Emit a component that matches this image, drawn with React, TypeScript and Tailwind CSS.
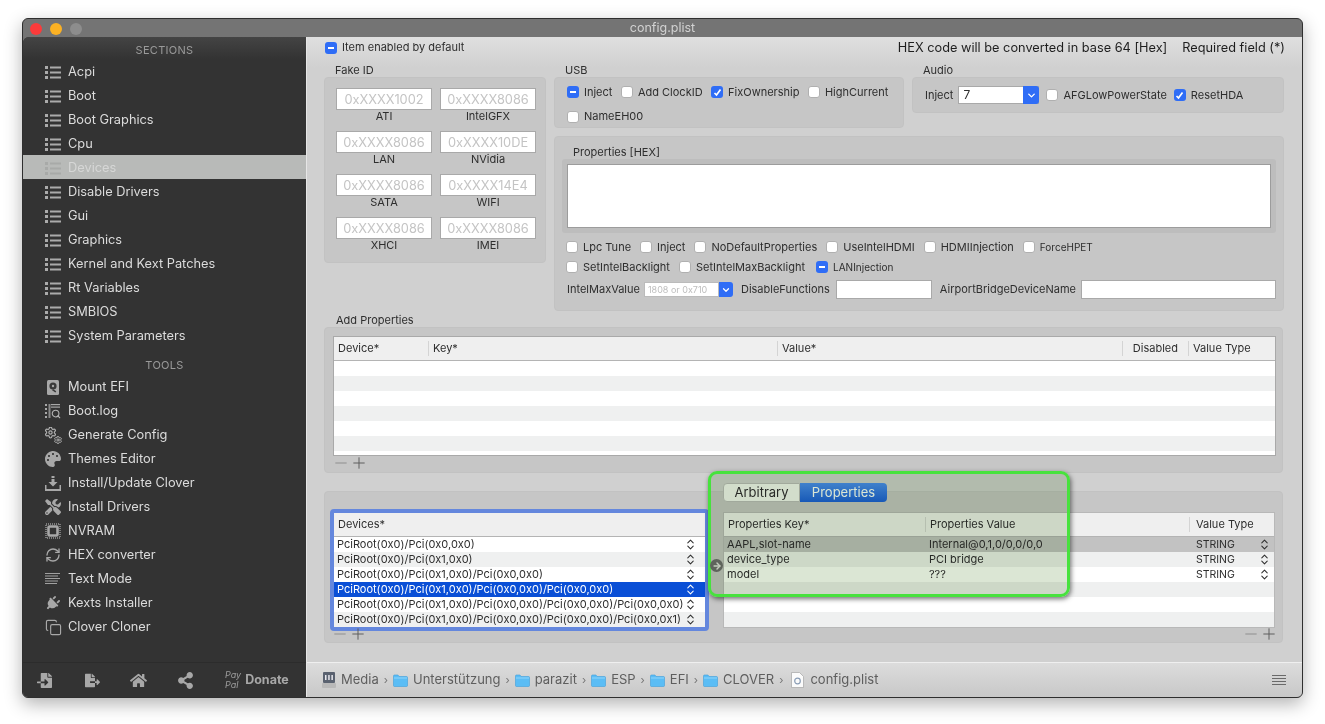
import { ArrowRight, Copy, ChevronDown, ChevronsUpDown, Minus, Plus, RefreshCw, Search, Settings } from "lucide-react"
import { FaFileExport, FaFileImport, FaHome, FaPalette, FaPlug, FaShareAlt, FaTools } from "react-icons/fa"
import type { ReactNode } from "react"

const sections = ["Acpi", "Boot", "Boot Graphics", "Cpu", "Devices", "Disable Drivers", "Gui", "Graphics", "Kernel and Kext Patches", "Rt Variables", "SMBIOS", "System Parameters"]

const fakeIds = [
  ["0xXXXX1002", "ATI"],
  ["0xXXXX8086", "IntelGFX"],
  ["0xXXXX8086", "LAN"],
  ["0xXXXX10DE", "NVidia"],
  ["0xXXXX8086", "SATA"],
  ["0xXXXX14E4", "WIFI"],
  ["0xXXXX8086", "XHCI"],
  ["0xXXXX8086", "IMEI"],
]

const devices = [
  "PciRoot(0x0)/Pci(0x0,0x0)",
  "PciRoot(0x0)/Pci(0x1,0x0)",
  "PciRoot(0x0)/Pci(0x1,0x0)/Pci(0x0,0x0)",
  "PciRoot(0x0)/Pci(0x1,0x0)/Pci(0x0,0x0)/Pci(0x0,0x0)",
  "PciRoot(0x0)/Pci(0x1,0x0)/Pci(0x0,0x0)/Pci(0x0,0x0)/Pci(0x0,0x0)",
  "PciRoot(0x0)/Pci(0x1,0x0)/Pci(0x0,0x0)/Pci(0x0,0x0)/Pci(0x0,0x1)",
]

const properties = [
  ["AAPL,slot-name", "Internal@0,1,0/0,0/0,0"],
  ["device_type", "PCI bridge"],
  ["model", "???"],
]

function ListIcon({ color = "#ababab" }: { color?: string }) {
  return (
    <svg width="16" height="13" viewBox="0 0 16 13" fill={color}>
      <rect x="0" y="0" width="3" height="3" />
      <rect x="0" y="5" width="3" height="3" />
      <rect x="0" y="10" width="3" height="3" />
      <rect x="5" y="0.5" width="11" height="2" />
      <rect x="5" y="5.5" width="11" height="2" />
      <rect x="5" y="10.5" width="11" height="2" />
    </svg>
  )
}

function DiskIcon() {
  return (
    <svg width="16" height="16" viewBox="0 0 16 16">
      <rect x="2" y="1" width="12" height="15" rx="1.5" fill="#a8a8a8" />
      <circle cx="8" cy="7" r="3.6" fill="#3a3a3a" />
      <circle cx="8" cy="7" r="1.2" fill="#a8a8a8" />
      <rect x="8" y="10" width="4" height="1.6" fill="#3a3a3a" transform="rotate(35 8 10)" />
    </svg>
  )
}

function LogIcon() {
  return (
    <svg width="16" height="16" viewBox="0 0 16 16" fill="#a8a8a8">
      <rect x="0" y="1" width="2" height="2" />
      <rect x="0" y="5" width="2" height="2" />
      <rect x="0" y="9" width="2" height="2" />
      <rect x="0" y="13" width="2" height="2" />
      <rect x="3.5" y="1" width="2" height="14" fill="#8a8a8a" />
      <rect x="6" y="1" width="9" height="1.2" />
      <rect x="6" y="3.5" width="9" height="1.2" />
      <Search x={6} y={6} width={10} height={10} color="#b5b5b5" strokeWidth={2.6} />
    </svg>
  )
}

function GearsIcon() {
  return (
    <svg width="17" height="17" viewBox="0 0 17 17">
      <Settings x={-1} y={-1} width={13} height={13} color="#b0b0b0" strokeWidth={2.2} />
      <Settings x={8.5} y={8.5} width={9} height={9} color="#b0b0b0" strokeWidth={2.6} />
    </svg>
  )
}

function InstallIcon() {
  return (
    <svg width="16" height="15" viewBox="0 0 16 15" fill="#a8a8a8">
      <rect x="6.5" y="0" width="3" height="2" />
      <path d="M6.5 3h3v3h3L8 10.5 3.500 6h3z" />
      <path d="M0 9h1.500v4h13V9H16v6H0z" />
    </svg>
  )
}

function ChipIcon() {
  return (
    <svg width="16" height="16" viewBox="0 0 16 16" fill="none">
      <rect x="1" y="1" width="14" height="14" stroke="#7d7d7d" strokeWidth="2" strokeDasharray="1 1" />
      <rect x="3.500" y="3.500" width="9" height="9" rx="1" stroke="#a8a8a8" strokeWidth="2.600" />
    </svg>
  )
}

function TextIcon() {
  return (
    <svg width="15" height="12" viewBox="0 0 15 12" fill="#a0a0a0">
      <rect x="0" y="0" width="15" height="1" />
      <rect x="0" y="2.500" width="13" height="1" />
      <rect x="0" y="5" width="15" height="1" />
      <rect x="0" y="7.500" width="13" height="1" />
      <rect x="0" y="10" width="12" height="1" />
    </svg>
  )
}

const tools: [string, ReactNode][] = [
  ["Mount EFI", <DiskIcon />],
  ["Boot.log", <LogIcon />],
  ["Generate Config", <GearsIcon />],
  ["Themes Editor", <FaPalette size={16} color="#a8a8a8" />],
  ["Install/Update Clover", <InstallIcon />],
  ["Install Drivers", <FaTools size={16} color="#a8a8a8" />],
  ["NVRAM", <ChipIcon />],
  ["HEX converter", <RefreshCw size={16} color="#a8a8a8" strokeWidth={2} />],
  ["Text Mode", <TextIcon />],
  ["Kexts Installer", <FaPlug size={15} color="#a8a8a8" className="rotate-45" />],
  ["Clover Cloner", <Copy size={17} color="#a8a8a8" strokeWidth={1.6} />],
]

function SideRow({ icon, label, active }: { icon: ReactNode; label: string; active?: boolean }) {
  return (
    <div className={`flex h-6 items-center pt-[2px] text-[12.8px] ${active ? "bg-[#b8bab8] text-[#d6d7d6]" : "text-[#dcdcdc]"}`}>
      <div className="ml-[22px] flex w-[23px] shrink-0 justify-start">{icon}</div>
      <span>{label}</span>
    </div>
  )
}

function Sidebar() {
  return (
    <aside className="flex w-[283px] shrink-0 flex-col rounded-tl-[6px] bg-[#333333] font-['Inter',sans-serif]">
      <div className="flex h-[22px] items-center justify-center rounded-tl-[6px] bg-gradient-to-b from-[#444444] to-[#333333] pt-[5px] text-[11px] tracking-[0.3px] text-[#9a9a9a]">SECTIONS</div>
      {sections.map((s) => (
        <SideRow key={s} label={s} active={s === "Devices"} icon={<ListIcon color={s === "Devices" ? "#a8aaa8" : "#ababab"} />} />
      ))}
      <div className="mt-[7px] flex h-5 items-center justify-center pt-[2px] text-[11px] tracking-[0.3px] text-[#9a9a9a]">TOOLS</div>
      {tools.map(([label, icon]) => (
        <SideRow key={label} label={label} icon={icon} />
      ))}
      <div className="mt-auto flex h-[35px] items-center border-t border-t-[#2c2c2c] pl-[14px] text-[#a8a8a8]">
        <FaFileImport size={15} />
        <FaFileExport size={15} className="ml-[33px]" />
        <FaHome size={17} className="ml-[30px]" />
        <FaShareAlt size={17} className="ml-[30px]" />
        <div className="ml-[31px] flex flex-col text-[9px] leading-[10px] italic text-[#9c9c9c]">
          <span>Pay</span>
          <span>Pal</span>
        </div>
        <span className="ml-1 text-[12.5px] font-bold text-[#a8a8a8]">Donate</span>
      </div>
    </aside>
  )
}

function Check({ state, label, small }: { state?: "on" | "mixed"; label: string; small?: boolean }) {
  return (
    <div className="flex items-center gap-[5px]">
      <span className={`flex h-3 w-3 shrink-0 items-center justify-center rounded-[3px] ${state ? "bg-[#2f6df6]" : "border border-[#b0b0b0] bg-white"}`}>
        {state === "mixed" && <span className="h-[2px] w-[6px] bg-white" />}
        {state === "on" && (
          <svg width="9" height="9" viewBox="0 0 9 9" fill="none" stroke="white" strokeWidth="1.700">
            <path d="M1.500 5l2 2 4-5.500" />
          </svg>
        )}
      </span>
      <span className={small ? "text-[10px]" : "text-[11px]"}>{label}</span>
    </div>
  )
}

function Group({ className, children }: { className?: string; children: ReactNode }) {
  return <div className={`rounded-[4px] border border-[#c2c2c2] bg-[#c6c6c6] ${className ?? ""}`}>{children}</div>
}

function Stepper() {
  return <ChevronsUpDown size={13} strokeWidth={1.9} className="shrink-0" />
}

function PlusMinus({ className }: { className?: string }) {
  return (
    <div className={`flex items-center ${className ?? ""}`}>
      <Minus size={18} strokeWidth={1.3} color="#8c8c8c" />
      <Plus size={18} strokeWidth={1.3} color="#5c5c5c" />
    </div>
  )
}

function HeaderCell({ label, className }: { label: string; className: string }) {
  return (
    <div className={`flex h-[15px] items-center border-r border-r-[#d4d4d4] pl-[4px] last:border-r-0 ${className}`}>{label}</div>
  )
}

function Folder() {
  return (
    <svg width="15" height="13" viewBox="0 0 15 13">
      <path d="M0.500 2 Q0.500 1 1.500 1 H5 L6 2.500 H13.500 Q14.500 2.500 14.500 3.500 V11.500 Q14.500 12.500 13.500 12.500 H1.500 Q0.500 12.500 0.500 11.500z" fill="#5bbdf5" stroke="#3f9fdc" strokeWidth="0.600" />
      <rect x="1" y="3.500" width="13" height="1" fill="#8fd5fb" />
    </svg>
  )
}

function PathBar() {
  const folders = ["Unterstützung", "parazit", "ESP", "EFI", "CLOVER"]
  return (
    <div className="flex h-[35px] items-center border-t border-t-[#efefef] bg-gradient-to-b from-[#dcdcdc] to-[#c8c8c8] pl-[15px] pr-[16px] font-['Inter',sans-serif] text-[13px] text-[#5e5e5e]">
      <svg width="14" height="16" viewBox="0 0 14 16">
        <rect x="1" y="0" width="12" height="11" rx="1" fill="#5a6270" />
        <path d="M3 3h1.500v5H3zM6.200 3h1.500v5H6.200zM9.400 3h1.500v5H9.400z" fill="#e8e8ee" />
        <rect x="0" y="11" width="14" height="5" rx="1" fill="#b9b9b9" />
      </svg>
      <span className="ml-[5px]">Media</span>
      {folders.map((f) => (
        <div key={f} className="flex items-center">
          <span className="mx-[5px] text-[11px] text-[#777777]">›</span>
          <Folder />
          <span className="ml-[5px]">{f}</span>
        </div>
      ))}
      <span className="ml-[5px] mr-[8px] text-[11px] text-[#777777]">›</span>
      <svg width="13" height="16" viewBox="0 0 13 16">
        <path d="M0.500 0.500H8.500L12.500 4.500V15.500H0.500z" fill="#fbfbfb" stroke="#a5a5a5" strokeWidth="0.700" />
        <circle cx="6.500" cy="9" r="2.800" fill="none" stroke="#8a9db5" strokeWidth="1.200" />
      </svg>
      <span className="ml-[6px]">config.plist</span>
      <div className="ml-auto flex flex-col gap-[2px]">
        <span className="h-px w-[14px] bg-[#6a6a6a]" />
        <span className="h-px w-[14px] bg-[#6a6a6a]" />
        <span className="h-px w-[14px] bg-[#6a6a6a]" />
        <span className="h-px w-[14px] bg-[#6a6a6a]" />
      </div>
    </div>
  )
}

function MainPanel() {
  return (
    <div className="relative flex min-w-0 flex-1 flex-col font-['Inter',sans-serif] text-[11px] text-[#2e2e2e]">
      <div className="flex-1 bg-gradient-to-b from-[#dfdfdf] via-[#d0d0d0] via-[5%] to-[#d0d0d0] pl-[17px] pr-[19px]">
        <div className="-mr-[2px] flex h-5 items-center pt-[1px]">
          <div className="ml-[1px]">
            <Check state="mixed" label="Item enabled by default" />
          </div>
          <span className="ml-auto text-[12.75px] text-[#1e1e1e]">HEX code will be converted in base 64 [Hex]</span>
          <span className="ml-[15px] text-[12.75px] text-[#1e1e1e]">Required field (*)</span>
        </div>

        <div className="mt-[6px] flex gap-2">
          <div className="w-[222px] shrink-0">
            <div className="flex h-[14px] items-center pl-[11px]">Fake ID</div>
            <Group className="h-[186px] px-[11px] pt-[10px]">
              <div className="grid grid-cols-[96px_96px] gap-x-2">
                {fakeIds.map(([value, label]) => (
                  <div key={label} className="h-[43px]">
                    <div className="flex h-[22px] items-center justify-center border border-[#a9a9a9] bg-white pt-[2px] text-[12.8px] text-[#c4c4c4]">{value}</div>
                    <div className="flex h-3 items-center justify-center">{label}</div>
                  </div>
                ))}
              </div>
            </Group>
          </div>

          <div className="w-[730px] shrink-0">
            <div className="flex gap-2">
              <div className="w-[350px] shrink-0">
                <div className="flex h-[14px] items-center pl-[11px]">USB</div>
                <Group className="h-[51px] pl-3">
                  <div className="flex h-[28px] items-center gap-[8.5px]">
                    <Check state="mixed" label="Inject" />
                    <Check label="Add ClockID" />
                    <Check state="on" label="FixOwnership" />
                    <Check label="HighCurrent" />
                  </div>
                  <div className="flex h-[21px] items-center">
                    <Check label="NameEH00" />
                  </div>
                </Group>
              </div>
              <div className="w-[372px] shrink-0">
                <div className="flex h-[14px] items-center pl-[11px]">Audio</div>
                <Group className="flex h-[36px] items-center pl-3">
                  <span>Inject</span>
                  <div className="ml-[5px] flex h-[18px] w-[81px] items-center border border-[#a9a9a9] bg-white pl-1 text-[12px]">7</div>
                  <div className="ml-[-16px] flex h-[18px] w-4 items-center justify-center rounded-r-[3px] bg-[#2f6df6] text-white">
                    <ChevronDown size={11} strokeWidth={3} />
                  </div>
                  <div className="ml-[7px] flex items-center gap-[7px]">
                    <Check label="AFGLowPowerState" />
                    <Check state="on" label="ResetHDA" />
                  </div>
                </Group>
              </div>
            </div>

            <Group className="mt-2 h-[175px] px-[7px]">
              <div className="flex h-[22px] items-center pl-[11px] pt-[8px]">Properties [HEX]</div>
              <div className="rounded-[3px] bg-[#bdbdbd] p-[5px]">
                <div className="h-[64px] border border-[#9c9c9c] bg-white" />
              </div>
              <div className="mt-[6px] flex h-[16px] items-center gap-[9px] pl-[4px]">
                <Check label="Lpc Tune" />
                <Check label="Inject" />
                <Check label="NoDefaultProperties" />
                <Check label="UseIntelHDMI" />
                <Check label="HDMIInjection" />
                <Check label="ForceHPET" small />
              </div>
              <div className="mt-[4px] flex h-[16px] items-center gap-[9px] pl-[4px]">
                <Check label="SetIntelBacklight" />
                <Check label="SetIntelMaxBacklight" />
                <div className="ml-[2px]">
                  <Check state="mixed" label="LANInjection" small />
                </div>
              </div>
              <div className="mt-[5px] flex h-[19px] items-center pl-[5px]">
                <span>IntelMaxValue</span>
                <div className="ml-1 flex h-[15px] w-[75px] items-center border border-[#bbbbbb] bg-white pl-[3px] text-[9px] text-[#bdbdbd]">1808 or 0x710</div>
                <div className="flex h-[15px] w-[14px] items-center justify-center rounded-r-[3px] bg-[#2f6df6] text-white">
                  <ChevronDown size={10} strokeWidth={3} />
                </div>
                <span className="ml-2">DisableFunctions</span>
                <div className="ml-auto h-[19px] w-[96px] border border-[#a9a9a9] bg-white" />
                <span className="ml-2">AirportBridgeDeviceName</span>
                <div className="ml-[5px] h-[19px] w-[195px] border border-[#a9a9a9] bg-white" />
              </div>
            </Group>
          </div>
        </div>

        <div className="mt-[2px] flex h-[14px] items-center pl-3">Add Properties</div>
        <Group className="h-[146px] pl-[8px] pt-2">
          <div className="h-[120px] w-[943px] border border-[#a9a9a9] bg-white">
            <div className="flex h-[24px] items-center border-b border-b-[#b4b4b4] bg-[#efefef] text-[11px]">
              <HeaderCell label="Device*" className="w-[95px] pl-[4px]" />
              <HeaderCell label="Key*" className="w-[349px]" />
              <HeaderCell label="Value*" className="w-[345px]" />
              <HeaderCell label="Disabled" className="w-[66px] justify-end pr-[10px]" />
              <HeaderCell label="Value Type" className="flex-1" />
            </div>
            {[0, 1, 2, 3, 4, 5].map((i) => (
              <div key={i} className={`h-[15px] ${i % 2 ? "bg-[#eff0f0]" : "bg-white"}`} />
            ))}
          </div>
          <PlusMinus className="-mt-[2px] -ml-[1px]" />
        </Group>

        <Group className="mt-[18px] flex h-[152px] pl-[5px]">
          <div className="mt-[17px] h-[122px] w-[379px] shrink-0">
            <div className="h-[122px] rounded-[4px] border-4 border-[#6487dd] bg-white">
              <div className="flex h-[24px] items-center border-b border-b-[#b4b4b4] bg-[#efefef] pl-[4px]">Devices*</div>
              {devices.map((d, i) => (
                <div key={d} className={`flex h-[15px] items-center justify-between pl-[3px] pr-[8px] ${i === 3 ? "bg-[#0a4fd6] text-white" : i % 2 ? "bg-[#eff0f0]" : "bg-white"}`}>
                  <span>{d}</span>
                  <Stepper />
                </div>
              ))}
            </div>
            <PlusMinus className="-mt-[6px] ml-px" />
          </div>

          <div className="ml-[14px] flex w-[552px] flex-col">
            <div className="-mt-[9px] flex h-[19px] w-[164px] text-[13px]">
              <div className="flex w-[77px] items-center justify-center rounded-l-[4px] border border-[#bcbcbc] bg-[#f5f5f5]">Arbitrary</div>
              <div className="flex w-[87px] items-center justify-center rounded-r-[4px] bg-gradient-to-b from-[#4a8ff5] to-[#1a62dc] text-white">Properties</div>
            </div>
            <div className="mt-[10px] h-[116px] border border-[#b8b8b8] bg-white">
              <div className="flex h-[24px] items-center border-b border-b-[#b4b4b4] bg-[#efefef]">
                <HeaderCell label="Properties Key*" className="w-[202px]" />
                <HeaderCell label="Properties Value" className="w-[264px]" />
                <HeaderCell label="Value Type" className="flex-1 pl-[6px]" />
              </div>
              {properties.map(([k, v], i) => (
                <div key={k} className={`flex h-[15px] items-center ${i === 0 ? "bg-[#c2c2c2]" : i % 2 ? "bg-[#eff0f0]" : "bg-white"}`}>
                  <span className="w-[205px] pl-[3px]">{k}</span>
                  <span className="w-[267px]">{v}</span>
                  <span className="text-[10.5px]">STRING</span>
                  <span className="ml-auto flex pr-[3px]"><Stepper /></span>
                </div>
              ))}
              {[0, 1, 2].map((i) => (
                <div key={i} className={`h-[15px] ${i % 2 ? "bg-white" : "bg-[#eff0f0]"}`} />
              ))}
            </div>
            <PlusMinus className="-mt-[3px] -mr-[3px] justify-end" />
          </div>
        </Group>
      </div>
      <PathBar />

      <div className="absolute left-[401px] top-[434px] h-[126px] w-[362px] rounded-[9px] border-[3px] border-[#47e23d] shadow-[1px_2px_5px_rgba(0,0,0,0.55)]">
        <div className="absolute inset-0 rounded-[6px] bg-[#dbe6d4] mix-blend-multiply" />
        <div className="absolute -left-[1px] top-[85px] flex h-[13px] w-[13px] items-center justify-center rounded-full bg-[#5f645c] text-[#c3cbbd]">
          <ArrowRight size={10} strokeWidth={3.5} />
        </div>
      </div>
    </div>
  )
}

export default function App() {
  return (
    <div className="h-[724px] w-[1325px] overflow-hidden bg-white pl-[22px] pt-[18px]">
      <div className="flex h-[680px] w-[1281px] flex-col overflow-hidden rounded-[6px] border border-[#2f2f2f] bg-[#747474] shadow-[0_6px_18px_rgba(0,0,0,0.3)]">
        <div className="relative flex h-[18px] shrink-0 items-center justify-center pt-px font-['Inter',sans-serif] text-[12.5px] text-[#d2d2d2]">
          <div className="absolute left-[7px] flex gap-2">
            <span className="h-3 w-3 rounded-full bg-[#fc3b3b]" />
            <span className="h-3 w-3 rounded-full bg-[#fbb124]" />
            <span className="h-3 w-3 rounded-full bg-[#8d8d8d]" />
          </div>
          config.plist
        </div>
        <div className="flex min-h-0 flex-1">
          <Sidebar />
          <div className="w-px shrink-0 bg-[#e6e6e6]" />
          <MainPanel />
        </div>
      </div>
    </div>
  )
}
